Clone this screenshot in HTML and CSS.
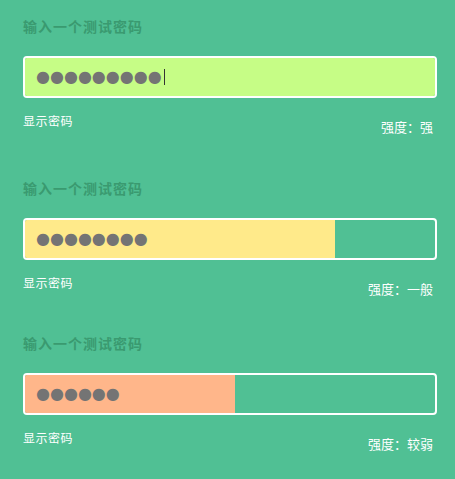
FILE: index.html
```html
<!DOCTYPE html>
<html lang="zh-CN">
<head>
<meta charset="utf-8">
<title>密码强度</title>
<link rel="stylesheet" href="styles.css">
</head>
<body>
<div class="page">
  <section class="field field--first">
    <div class="label">输入一个测试密码</div>
    <div class="box">
      <div class="fill fill--strong" style="width:100%"></div>
      <div class="dots">●●●●●●●●●<span class="caret"></span></div>
    </div>
    <div class="meta">
      <span class="show">显示密码</span>
      <span class="strength">强度：强</span>
    </div>
  </section>
  <section class="field field--second">
    <div class="label">输入一个测试密码</div>
    <div class="box">
      <div class="fill fill--medium" style="width:75.6%"></div>
      <div class="dots">●●●●●●●●</div>
    </div>
    <div class="meta">
      <span class="show">显示密码</span>
      <span class="strength">强度：一般</span>
    </div>
  </section>
  <section class="field">
    <div class="label">输入一个测试密码</div>
    <div class="box">
      <div class="fill fill--weak" style="width:51.2%"></div>
      <div class="dots">●●●●●●</div>
    </div>
    <div class="meta">
      <span class="show">显示密码</span>
      <span class="strength">强度：较弱</span>
    </div>
  </section>
</div>
</body>
</html>
```
FILE: styles.css
```css
html, body {
  margin: 0;
  padding: 0;
  background: #50c094;
}
body {
  width: 455px;
  height: 479px;
  overflow: hidden;
  font-family: "Noto Sans CJK SC", "DejaVu Sans", sans-serif;
}
.page {
  padding: 16px 18px 0 23px;
  display: flex;
  flex-direction: column;
}
.field {
  display: flex;
  flex-direction: column;
}
.field--first { margin-bottom: 43px; }
.field--second { margin-bottom: 36px; }
.label {
  font-size: 14px;
  line-height: 20px;
  letter-spacing: 1px;
  font-weight: bold;
  color: #3a9a70;
}
.box {
  margin-top: 20px;
  height: 38px;
  border: 2px solid #ffffff;
  border-radius: 4px;
  position: relative;
  overflow: hidden;
  display: flex;
  align-items: center;
}
.fill {
  position: absolute;
  left: 0;
  top: 0;
  bottom: 0;
}
.fill--strong { background: #c6fd86; }
.fill--medium { background: #ffea8a; }
.fill--weak { background: #ffb68a; }
.dots {
  position: relative;
  margin-left: 11px;
  font-family: "DejaVu Sans", sans-serif;
  font-size: 16px;
  line-height: 20px;
  color: #747474;
  display: flex;
  align-items: center;
}
.caret {
  display: inline-block;
  width: 1px;
  height: 16px;
  background: #333;
  margin-left: 2px;
}
.meta {
  margin-top: 15px;
  display: flex;
  justify-content: space-between;
  align-items: flex-start;
  padding-right: 4px;
  color: #ffffff;
  line-height: 16px;
}
.show {
  font-size: 12px;
  letter-spacing: 0.5px;
}
.strength {
  font-size: 13px;
  padding-top: 6px;
}
```
